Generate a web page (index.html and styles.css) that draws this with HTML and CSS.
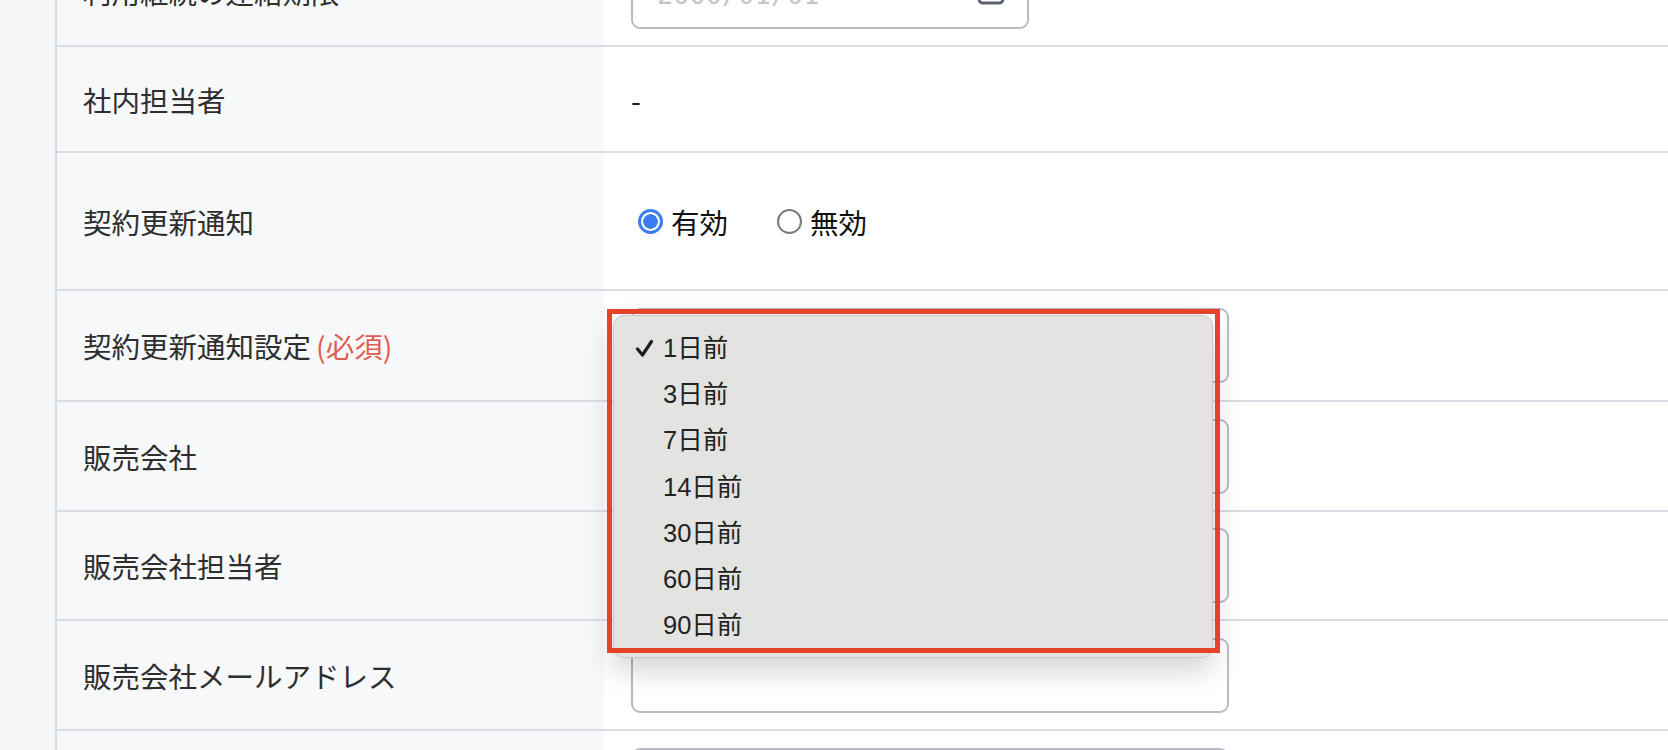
FILE: index.html
```html
<!DOCTYPE html>
<html lang="ja">
<head>
    <meta charset="UTF-8">
    <meta name="viewport" content="width=device-width, initial-scale=1.0">
    <title>契約情報</title>
    <link rel="stylesheet" href="styles.css">
</head>
<body>
    <div class="form">
        <div class="row">
            <div class="label">利用継続の連絡期限</div>
            <div class="value">
                <div class="field date-field">
                    <span class="placeholder">2000/01/01</span>
                    <svg class="cal-icon" width="28" height="28" viewBox="0 0 28 28">
                        <rect x="2" y="2" width="24" height="24" rx="4" fill="none" stroke="#5b6170" stroke-width="3"/>
                    </svg>
                </div>
            </div>
        </div>

        <div class="row row-text">
            <div class="label">社内担当者</div>
            <div class="value">-</div>
        </div>

        <div class="row row-radio">
            <div class="label">契約更新通知</div>
            <div class="value">
                <label class="radio"><span class="dot checked"></span>有効</label>
                <label class="radio"><span class="dot"></span>無効</label>
            </div>
        </div>

        <div class="row row-select">
            <div class="label">契約更新通知設定<span class="required">(必須)</span></div>
            <div class="value">
                <div class="field select-field"><span class="arrow"></span></div>

                <div class="popup">
                    <div class="option"><svg class="check" width="19" height="19" viewBox="0 0 19 19"><path d="M2.5 10 L7.5 16 L16.5 2.5" fill="none" stroke="#1e1e1e" stroke-width="3.2" stroke-linecap="round" stroke-linejoin="round"/></svg>1日前</div>
                    <div class="option">3日前</div>
                    <div class="option">7日前</div>
                    <div class="option">14日前</div>
                    <div class="option">30日前</div>
                    <div class="option">60日前</div>
                    <div class="option">90日前</div>
                </div>
                <div class="highlight"></div>
            </div>
        </div>

        <div class="row">
            <div class="label">販売会社</div>
            <div class="value"><div class="field"></div></div>
        </div>

        <div class="row row-short">
            <div class="label">販売会社担当者</div>
            <div class="value"><div class="field"></div></div>
        </div>

        <div class="row">
            <div class="label">販売会社メールアドレス</div>
            <div class="value"><div class="field"></div></div>
        </div>

        <div class="row">
            <div class="label"></div>
            <div class="value"><div class="field"></div></div>
        </div>
    </div>
</body>
</html>
```

FILE: styles.css
```css
body {
    margin: 0;
    padding: 0;
    background-color: #f4f5f7;
    font-family: "Noto Sans CJK JP", "Liberation Sans", sans-serif;
    color: #2b2b2b;
    overflow: hidden;
}
.form {
    margin-left: 55px;
    margin-top: -63px;
    border-left: 2px solid #d6dae2;
    background: #ffffff;
}
.row {
    display: flex;
    min-height: 108px;
    border-bottom: 2px solid #d9dde5;
}
.row-text {
    min-height: 104px;
}
.row-radio {
    min-height: 136px;
}
.row-select {
    min-height: 109px;
}
.row-short {
    min-height: 107px;
}
.label {
    width: 521px;
    padding-left: 26px;
    background: #f7f8fa;
    display: flex;
    align-items: center;
    font-size: 28.5px;
    color: #2e2e2e;
}
.required {
    color: #e05d52;
    margin-left: 5px;
}
.value {
    flex: 1;
    position: relative;
    display: flex;
    align-items: center;
    padding: 0 27px;
    font-size: 28.5px;
    color: #1e1e1e;
}
.field {
    box-sizing: border-box;
    width: 598px;
    height: 75px;
    border: 2px solid #b7bbc6;
    border-radius: 9px;
    background: #ffffff;
    display: flex;
    align-items: center;
}
.date-field {
    width: 398px;
    padding: 0 22px 0 24px;
    justify-content: space-between;
}
.placeholder {
    font-family: "DejaVu Sans Mono", monospace;
    font-size: 27px;
    color: #c3c6ce;
    margin-top: 6px;
}
.select-field {
    justify-content: flex-end;
    padding-right: 14px;
}
.arrow {
    width: 3px;
    height: 3px;
    background: #555;
}
.radio {
    display: flex;
    align-items: center;
    margin-left: 7px;
    margin-right: 42px;
    color: #111;
}
.dot {
    box-sizing: border-box;
    width: 25px;
    height: 25px;
    border: 2px solid #7a7a7a;
    border-radius: 50%;
    margin-right: 8px;
    background: #fff;
}
.dot.checked {
    border: 3px solid #3a7ef2;
    background: radial-gradient(circle, #3a7ef2 0 7px, #ffffff 7.5px);
}

/* native select popup */
.popup {
    position: absolute;
    left: 9px;
    top: 24px;
    width: 600px;
    height: 343px;
    box-sizing: border-box;
    padding-top: 9px;
    background: #e3e3e1;
    border: 1px solid #c9c9c7;
    border-radius: 11px;
    box-shadow: 0 12px 30px rgba(0, 0, 0, 0.18);
    z-index: 5;
}
.option {
    position: relative;
    height: 46.2px;
    line-height: 46px;
    padding-left: 49px;
    font-family: "Liberation Sans", "Noto Sans CJK JP", sans-serif;
    font-size: 25.5px;
    color: #222;
}
.check {
    position: absolute;
    left: 21px;
    top: 14px;
}
.highlight {
    position: absolute;
    left: 3px;
    top: 18px;
    width: 613px;
    height: 344px;
    box-sizing: border-box;
    border: 5px solid #e8412a;
    z-index: 6;
}
```
